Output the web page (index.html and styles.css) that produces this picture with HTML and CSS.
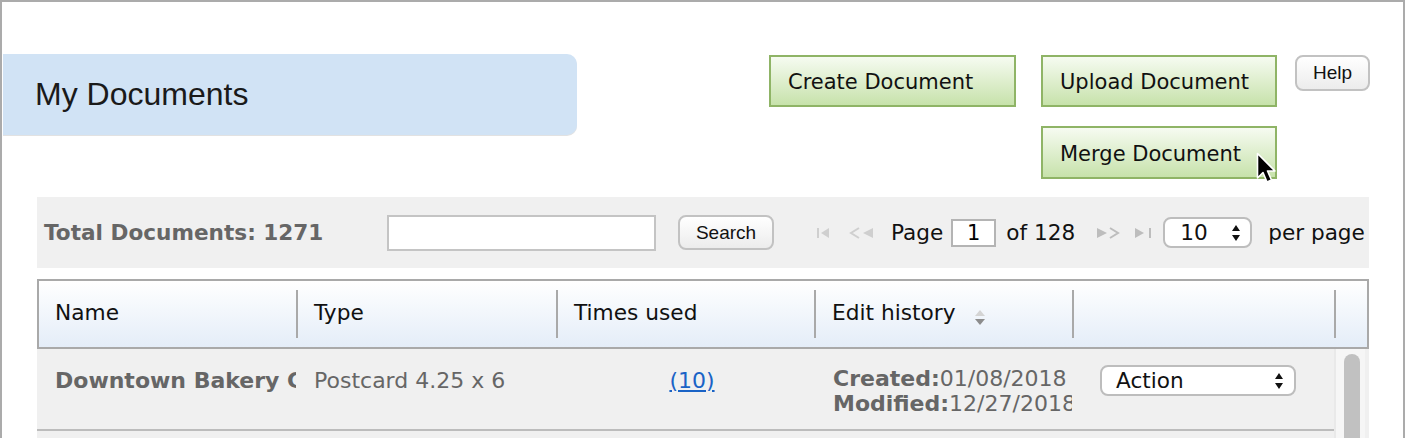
FILE: index.html
```html
<!DOCTYPE html>
<html lang="en">
<head>
    <meta charset="UTF-8">
    <meta name="viewport" content="width=device-width, initial-scale=1.0">
    <title>My Documents</title>
    <link rel="stylesheet" href="styles.css">
</head>
<body>
    <div class="page">
        <div class="top">
            <div class="title-bar"><h1>My Documents</h1></div>
            <div class="actions">
                <button class="btn-green create">Create Document</button>
                <button class="btn-green upload">Upload Document</button>
                <button class="btn-help">Help</button>
                <button class="btn-green merge">Merge Document</button>
                <svg class="cursor" width="24" height="34" viewBox="0 0 24 34">
                    <path d="M1.5 1.5 L1.5 26 L7 20.5 L11 30 L15.5 28 L11.5 19 L19 19 Z" fill="#000" stroke="#fff" stroke-width="1.6" stroke-linejoin="round"/>
                </svg>
            </div>
        </div>

        <div class="toolbar">
            <div class="total">Total Documents: 1271</div>
            <input class="search-box" type="text">
            <button class="btn-search">Search</button>
            <div class="pager">
                <svg class="pg-icon first" width="13" height="12" viewBox="0 0 13 12">
                    <rect x="0" y="1" width="2" height="10" fill="#cfcfcf"/>
                    <path d="M12 1 L4 6 L12 11 Z" fill="#cfcfcf"/>
                </svg>
                <svg class="pg-icon prev" width="25" height="12" viewBox="0 0 25 12">
                    <path d="M10 1 L2 6 L10 11" fill="none" stroke="#cfcfcf" stroke-width="2"/>
                    <path d="M24 1 L14 6 L24 11 Z" fill="#cfcfcf"/>
                </svg>
                <span class="pg-text">Page</span>
                <input class="page-box" type="text" value="1">
                <span class="pg-text">of 128</span>
                <svg class="pg-icon next" width="24" height="12" viewBox="0 0 24 12">
                    <path d="M1 1 L11 6 L1 11 Z" fill="#bdbdbd"/>
                    <path d="M14 1 L22 6 L14 11" fill="none" stroke="#bdbdbd" stroke-width="2"/>
                </svg>
                <svg class="pg-icon last" width="21" height="12" viewBox="0 0 21 12">
                    <path d="M1 1 L10 6 L1 11 Z" fill="#bdbdbd"/>
                    <rect x="15" y="1" width="2" height="10" fill="#bdbdbd"/>
                </svg>
                <div class="select per">
                    <span>10</span>
                    <svg width="10" height="18" viewBox="0 0 10 18"><path d="M5 1 L9 7 L1 7 Z M1 11 L9 11 L5 17 Z" fill="#111"/></svg>
                </div>
                <span class="pg-text">per page</span>
            </div>
        </div>

        <div class="grid">
            <div class="grid-head">
                <div class="th c1">Name</div>
                <div class="th c2">Type</div>
                <div class="th c3">Times used</div>
                <div class="th c4">Edit history
                    <svg class="sort" width="12" height="17" viewBox="0 0 12 17"><path d="M6 1 L11 7 L1 7 Z" fill="#d4d4d4"/><path d="M1 10 L11 10 L6 16 Z" fill="#8c8c8c"/></svg>
                </div>
                <div class="th c5"></div>
                <div class="th c6"></div>
            </div>
            <div class="grid-body">
                <div class="rows">
                    <div class="row">
                        <div class="td c1 name">Downtown Bakery Coupon</div>
                        <div class="td c2">Postcard 4.25 x 6</div>
                        <div class="td c3 used"><a href="#">(10)</a></div>
                        <div class="td c4 history">
                            <div><b>Created:</b>01/08/2018</div>
                            <div><b>Modified:</b>12/27/2018</div>
                        </div>
                        <div class="td c5">
                            <div class="select action">
                                <span>Action</span>
                                <svg width="10" height="18" viewBox="0 0 10 18"><path d="M5 1 L9 7 L1 7 Z M1 11 L9 11 L5 17 Z" fill="#111"/></svg>
                            </div>
                        </div>
                    </div>
                    <div class="row"></div>
                </div>
                <div class="scroll"><div class="thumb"></div></div>
            </div>
        </div>
    </div>
</body>
</html>
```

FILE: styles.css
```css
html, body {
    margin: 0;
    padding: 0;
    height: 438px;
    overflow: hidden;
    background: #fff;
}
body {
    font-family: "DejaVu Sans", Verdana, sans-serif;
    color: #111;
}
.page {
    box-sizing: border-box;
    width: 1405px;
    height: 600px;
    border: 2px solid #ababab;
    border-bottom: none;
}
.top {
    display: flex;
    align-items: flex-start;
    padding-top: 52px;
}
.title-bar {
    width: 574px;
    height: 81px;
    margin-left: 1px;
    background: #d1e3f5;
    border-radius: 0 10px 10px 0;
    display: flex;
    align-items: center;
    box-shadow: 0 1px 0 #e2e2e2;
}
.title-bar h1 {
    margin: 0 0 0 32px;
    font-family: "Liberation Sans", Arial, sans-serif;
    font-weight: normal;
    font-size: 32px;
    color: #1a1a1a;
}
.actions {
    position: relative;
    margin-left: 192px;
    margin-top: 1px;
    display: grid;
    grid-template-columns: 247px 236px 75px;
    grid-template-rows: 52px 53px;
    column-gap: 25px;
    row-gap: 19px;
}
.actions .btn-help {
    width: 75px;
    justify-self: start;
    margin-left: -7px;
}
.btn-green {
    box-sizing: border-box;
    border: 2px solid #8fb466;
    background: linear-gradient(#f6fbf1, #c7e2ab);
    font-family: "DejaVu Sans", Verdana, sans-serif;
    font-size: 21px;
    color: #111;
    text-align: left;
    padding: 2px 0 0 17px;
    margin: 0;
}
.merge {
    grid-column: 2;
    grid-row: 2;
}
.btn-help, .btn-search {
    box-sizing: border-box;
    border: 2px solid #c2c2c2;
    border-radius: 8px;
    background: linear-gradient(#ffffff, #ececec);
    font-family: "Liberation Sans", Arial, sans-serif;
    font-size: 19px;
    color: #111;
    padding: 0;
    margin: 0;
}
.btn-help {
    height: 36px;
}
.cursor {
    position: absolute;
    left: 487px;
    top: 97px;
}

.toolbar {
    box-sizing: border-box;
    margin: 18px 0 0 35px;
    width: 1332px;
    height: 71px;
    background: #f0f0f0;
    display: flex;
    align-items: center;
    padding-left: 7px;
}
.total {
    width: 343px;
    flex: none;
    font-weight: bold;
    font-size: 21.6px;
    color: #666;
}
.search-box {
    box-sizing: border-box;
    width: 269px;
    height: 36px;
    border: 2px solid #c4c4c4;
    margin: 0;
    background: #fff;
}
.btn-search {
    width: 96px;
    height: 35px;
    margin-left: 22px;
}
.pager {
    display: flex;
    align-items: center;
    margin-left: 43px;
    font-size: 21.6px;
    color: #111;
}
.pg-icon.prev { margin-left: 19px; }
.pg-icon.prev + .pg-text { margin-left: 17px; }
.page-box {
    box-sizing: border-box;
    width: 45px;
    height: 28px;
    margin: 0 10px 0 8px;
    border: 2px solid #b4b4b4;
    font-family: "DejaVu Sans", Verdana, sans-serif;
    font-size: 21px;
    text-align: center;
    padding: 0;
    background: #fff;
}
.pg-icon.next { margin-left: 21px; }
.pg-icon.last { margin-left: 14px; }
.select {
    box-sizing: border-box;
    display: flex;
    align-items: center;
    justify-content: space-between;
    background: #fff;
    border: 2px solid #bdbdbd;
    border-radius: 8px;
    color: #111;
    font-size: 21.6px;
}
.select.per {
    width: 89px;
    height: 31px;
    margin: 0 16px 0 8px;
    padding: 0 9px 0 15px;
}
.select.action {
    width: 196px;
    height: 31px;
    padding: 0 10px 0 14px;
}

.grid {
    margin: 11px 0 0 35px;
    width: 1332px;
}
.grid-head {
    display: flex;
    height: 66px;
    border: 2px solid #a9a9a9;
    background: linear-gradient(#ffffff, #e4edf8);
}
.th {
    position: relative;
    box-sizing: border-box;
    display: flex;
    align-items: center;
    padding: 0 0 3px 16px;
    font-size: 21.7px;
    color: #111;
}
.th::after {
    content: "";
    position: absolute;
    right: 0;
    top: 9px;
    bottom: 9px;
    width: 2px;
    background: #a9a9a9;
}
.th.c6::after { display: none; }
.c1 { width: 259px; }
.c2 { width: 260px; }
.c3 { width: 258px; }
.c4 { width: 258px; }
.c5 { width: 262px; }
.c6 { width: 31px; }
.sort { margin-left: 18px; margin-top: 10px; }

.grid-body {
    display: flex;
    background: #f0f0f0;
}
.rows {
    width: 1297px;
}
.row {
    display: flex;
    height: 80px;
    border-bottom: 2px solid #bcbcbc;
}
.td {
    box-sizing: border-box;
    padding-top: 19px;
    padding-left: 18px;
    font-size: 22px;
    line-height: 25px;
    color: #666;
    white-space: nowrap;
    overflow: hidden;
}
.td.name { font-weight: bold; }
.td.used {
    text-align: center;
    padding-left: 14px;
}
.td.used a { color: #1a63c6; }
.td.history { padding-left: 19px; padding-top: 17px; }
.td.c5 { padding-left: 28px; padding-top: 16px; }
.scroll {
    width: 31px;
    height: 200px;
    background: #f6f6f6;
    border-left: 2px solid #e9e9e9;
    box-sizing: border-box;
    padding: 5px 0 0 8px;
}
.thumb {
    width: 16px;
    height: 200px;
    background: #c1c1c1;
    border-radius: 8px;
}
```
